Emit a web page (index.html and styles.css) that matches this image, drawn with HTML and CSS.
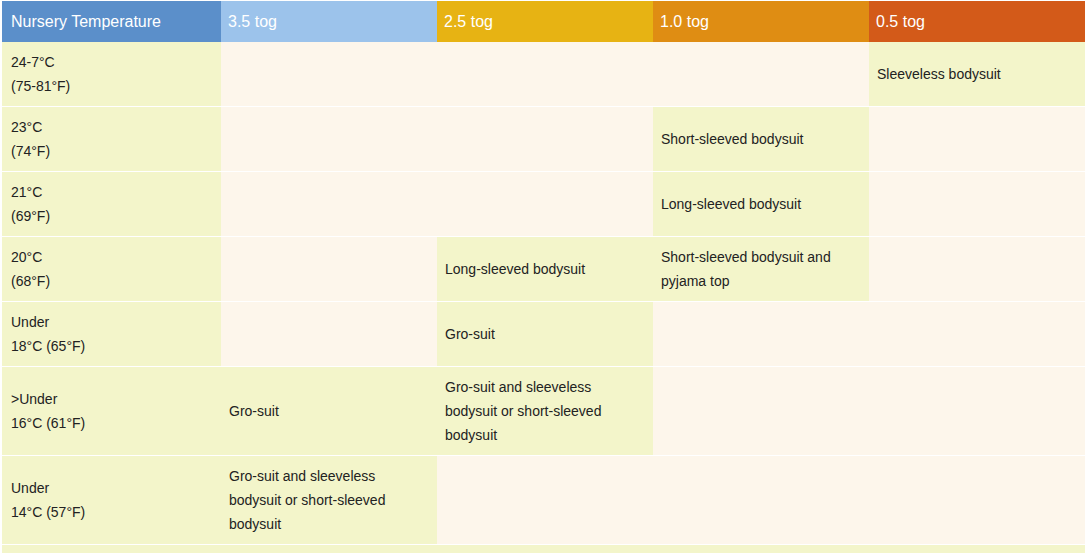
FILE: index.html
```html
<!DOCTYPE html>
<html>
<head>
<meta charset="utf-8">
<link rel="stylesheet" href="styles.css">
</head>
<body>
<table class="tog">
  <colgroup>
    <col class="c-first"><col class="c-tog"><col class="c-tog"><col class="c-tog"><col class="c-tog">
  </colgroup>
  <thead>
    <tr>
      <th class="h-temp">Nursery Temperature</th>
      <th class="h-35">3.5 tog</th>
      <th class="h-25">2.5 tog</th>
      <th class="h-10">1.0 tog</th>
      <th class="h-05">0.5 tog</th>
    </tr>
  </thead>
  <tbody>
    <tr>
      <td class="g">24-7°C<br>(75-81°F)</td>
      <td></td><td></td><td></td>
      <td class="g">Sleeveless bodysuit</td>
    </tr>
    <tr>
      <td class="g">23°C<br>(74°F)</td>
      <td></td><td></td>
      <td class="g">Short-sleeved bodysuit</td>
      <td></td>
    </tr>
    <tr>
      <td class="g">21°C<br>(69°F)</td>
      <td></td><td></td>
      <td class="g">Long-sleeved bodysuit</td>
      <td></td>
    </tr>
    <tr>
      <td class="g">20°C<br>(68°F)</td>
      <td></td>
      <td class="g">Long-sleeved bodysuit</td>
      <td class="g">Short-sleeved bodysuit and pyjama top</td>
      <td></td>
    </tr>
    <tr>
      <td class="g">Under<br>18°C (65°F)</td>
      <td></td>
      <td class="g">Gro-suit</td>
      <td></td><td></td>
    </tr>
    <tr>
      <td class="g">&gt;Under<br>16°C (61°F)</td>
      <td class="g">Gro-suit</td>
      <td class="g">Gro-suit and sleeveless bodysuit or short-sleeved bodysuit</td>
      <td></td><td></td>
    </tr>
    <tr>
      <td class="g">Under<br>14°C (57°F)</td>
      <td class="g">Gro-suit and sleeveless bodysuit or short-sleeved bodysuit</td>
      <td></td><td></td><td></td>
    </tr>
    <tr class="tail">
      <td class="g" colspan="5">&nbsp;</td>
    </tr>
  </tbody>
</table>
</body>
</html>
```

FILE: styles.css
```css
html, body {
  margin: 0;
  padding: 0;
  background: #ffffff;
}
body {
  padding: 1px 0 0 2px;
  font-family: "Liberation Sans", Arial, sans-serif;
}
.tog {
  border-collapse: collapse;
  border-spacing: 0;
  table-layout: fixed;
  width: 1083px;
}
.c-first { width: 219px; }
.c-tog { width: 216px; }
.tog th {
  text-align: left;
  font-weight: normal;
  font-size: 16px;
  line-height: 24px;
  color: #ffffff;
  padding: 9px 8px 8px 9px;
  vertical-align: middle;
}
.tog th + th { padding-left: 7px; }
.h-temp { background: #5b8fca; }
.h-35 { background: #9cc3eb; }
.h-25 { background: #e7b313; }
.h-10 { background: #df8d13; }
.h-05 { background: #d35a19; }
.tog td {
  font-size: 14px;
  line-height: 24px;
  color: #222222;
  padding: 8px 8px 8px 8px;
  vertical-align: middle;
  background: #fdf6eb;
  border-bottom: 1px solid #ffffff;
}
.tog td:first-child { padding-left: 9px; }
.tog td.g { background: #f3f5ca; }
.tail td { padding: 0; height: 24px; }
```
